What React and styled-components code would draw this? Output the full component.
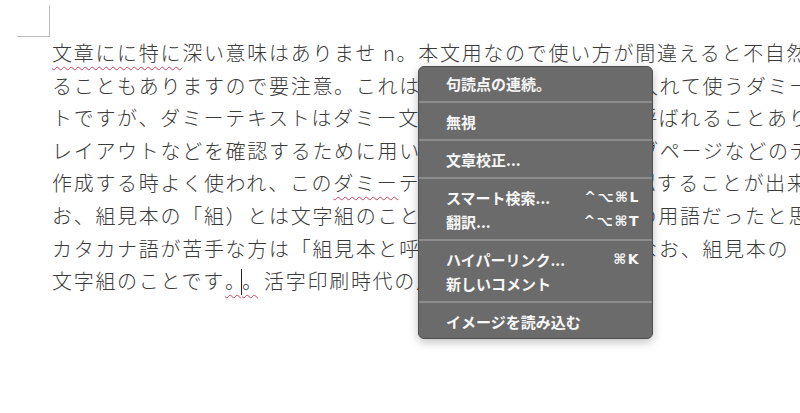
import React from 'react';
import styled, { createGlobalStyle } from 'styled-components';

const GlobalStyle = createGlobalStyle`
    html, body {
        margin: 0;
        padding: 0;
        background: #ffffff;
        overflow: hidden;
    }
`

const menu = [
    [{ label: '句読点の連続。' }],
    [{ label: '無視' }],
    [{ label: '文章校正...' }],
    [{ label: 'スマート検索...', keys: '^⌥⌘L' }, { label: '翻訳...', keys: '^⌥⌘T' }],
    [{ label: 'ハイパーリンク...', keys: '⌘K' }, { label: '新しいコメント' }],
    [{ label: 'イメージを読み込む' }],
];

const App = () => {
  const lines = [
    [<Wavy key="s">文章にに特に</Wavy>, '深い意味はありませ n。本文用なので使い方が間違えると不自然に見えることもあります。'],
    ['ることもありますので要注意。これは正式な文章の代わりに入れて使うダミーテキストです。'],
    ['トですが、ダミーテキストはダミー文書、組見本、仮文章と呼ばれることあり、主に書籍や'],
    ['レイアウトなどを確認するために用いられ、主に書籍やウェブページなどのデザインを'],
    ['作成する時よく使われ、この', <Wavy key="s">ダミー</Wavy>, 'テキストを利用して、確認することが出来ます。な'],
    ['お、組見本の「組）とは文字組のことで、昔の活字印刷時代の用語だったと思います。'],
    ['カタカナ語が苦手な方は「組見本と呼ぶとよいでしょうね。なお、組見本の「組」とは'],
    ['文字組のことです', <Wavy key="s"><Punct>。</Punct><Caret /><Punct>。</Punct></Wavy>, ' 活字印刷時代の用語だったと思います。'],
  ];

  return (
    <Page>
        <GlobalStyle />
        <CornerMark />
        <Body>
            {lines.map((parts, i) => <Line key={i}>{parts}</Line>)}
        </Body>
        <ContextMenu>
            {menu.map((group, i) => (
                <React.Fragment key={i}>
                    {i > 0 && <Separator />}
                    {group.map(item => (
                        <MenuItem key={item.label}>
                            <span>{item.label}</span>
                            {item.keys && <Keys>{item.keys}</Keys>}
                        </MenuItem>
                    ))}
                </React.Fragment>
            ))}
        </ContextMenu>
    </Page>
  )
}

export default App;

const Page = styled.div`
    position: relative;
    width: 800px;
    height: 413px;
    overflow: hidden;
    padding: 5px 0 0 17px;
    box-sizing: border-box;
    background: #ffffff;
`

const CornerMark = styled.div`
    width: 32px;
    height: 31px;
    border-right: 1px solid #bdbdbd;
    border-bottom: 1px solid #bdbdbd;
`

const Body = styled.div`
    margin-left: 35px;
    display: flex;
    flex-direction: column;
`

const Line = styled.div`
    height: 32.6px;
    line-height: 32.6px;
    white-space: nowrap;
    font-family: "Noto Sans CJK JP", "Noto Sans", sans-serif;
    font-size: 20px;
    font-weight: 300;
    letter-spacing: 1.7px;
    color: #3a3a3a;
`

const Wavy = styled.span`
    text-decoration: underline wavy #d2405a;
    text-decoration-thickness: 1px;
    text-underline-offset: 5px;
`

const Punct = styled.span`
    letter-spacing: -4px;
`

const Caret = styled.span`
    display: inline-block;
    width: 1px;
    height: 26px;
    vertical-align: -6px;
    background: #222;
`

const ContextMenu = styled.div`
    position: absolute;
    left: 418px;
    top: 66px;
    width: 235px;
    box-sizing: border-box;
    padding: 4px 0 5px;
    background: #6b6b6b;
    border: 1px solid #4f4f4f;
    border-radius: 6px;
    box-shadow: 0 3px 10px rgba(0, 0, 0, .25);
    display: flex;
    flex-direction: column;
`

const MenuItem = styled.div`
    height: 24px;
    display: flex;
    align-items: center;
    justify-content: space-between;
    padding: 0 12px 0 27px;
    font-family: "Noto Sans CJK JP", "Noto Sans", sans-serif;
    font-size: 15px;
    font-weight: 700;
    color: #f7f7f7;
    white-space: nowrap;
`

const Keys = styled.span`
    font-family: "DejaVu Sans", "Noto Sans CJK JP", sans-serif;
    font-size: 14px;
    font-weight: 700;
    letter-spacing: 1.5px;
`

const Separator = styled.div`
    height: 2px;
    margin: 6px 0;
    background: #8c8c8c;
`
